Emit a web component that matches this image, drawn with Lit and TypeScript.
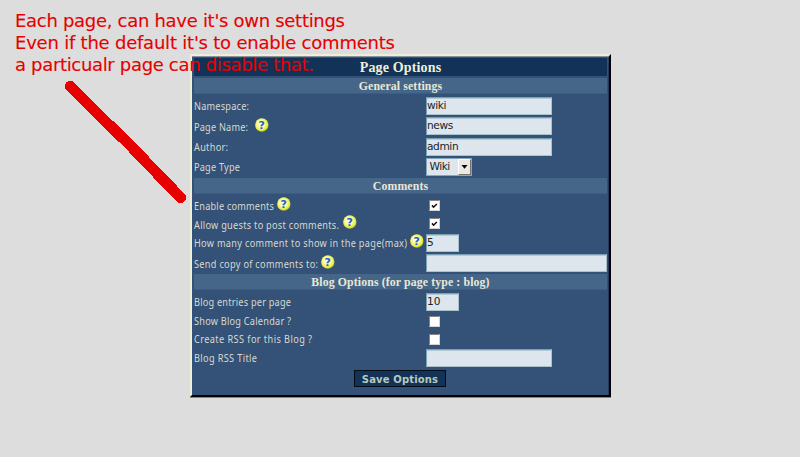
import { LitElement, html, svg, css, nothing } from "lit";
import { customElement, property } from "lit/decorators.js";
import { styleMap } from "lit/directives/style-map.js";

@customElement("help-icon")
class HelpIcon extends LitElement {
  static styles = css`
    :host { display: block; width: 14px; height: 14px; }
    svg { display: block; }
    .mark { font: bold 11px "DejaVu Sans", sans-serif; fill: #1f5fd0; }
  `;
  render() {
    return html`<svg width="14" height="14" viewBox="0 0 14 14">
      <defs>
        <radialGradient id="g" cx="45%" cy="42%" r="60%">
          <stop offset="0" stop-color="#ffffe8" />
          <stop offset=".5" stop-color="#f8fa9a" />
          <stop offset=".8" stop-color="#e6ec38" />
          <stop offset="1" stop-color="#a9b52c" />
        </radialGradient>
      </defs>
      <circle cx="6.8" cy="7" r="6.7" fill="url(#g)" />
      <text class="mark" x="6.8" y="11" text-anchor="middle">?</text>
    </svg>`;
  }
}

type Row = {
  label: string;
  h: number;
  w: number;
  dy?: number;
  help?: number;
  kind: "text" | "check" | "select";
  value?: string;
  size?: "mid" | "small" | "wide";
};

const general: Row[] = [
  { label: "Namespace:", h: 20, w: 55, kind: "text", value: "wiki", size: "mid" },
  { label: "Page Name:", h: 20, w: 54, dy: 1, help: 7, kind: "text", value: "news", size: "mid" },
  { label: "Author:", h: 21, w: 34, kind: "text", value: "admin", size: "mid" },
  { label: "Page Type", h: 20, w: 46, kind: "select", value: "Wiki" },
];
const comments: Row[] = [
  { label: "Enable comments", h: 20, w: 80, dy: 1, help: 3, kind: "check", value: "on" },
  { label: "Allow guests to post comments.", h: 17, w: 145, dy: 0.6, help: 4, kind: "check", value: "on" },
  { label: "How many comment to show in the page(max)", h: 21, w: 213, dy: 0.4, help: 3, kind: "text", value: "5", size: "small" },
  { label: "Send copy of comments to:", h: 20, w: 124, dy: 0.6, help: 3, kind: "text", value: "", size: "wide" },
];
const blog: Row[] = [
  { label: "Blog entries per page", h: 20, w: 97, kind: "text", value: "10", size: "small" },
  { label: "Show Blog Calendar ?", h: 18, w: 97, kind: "check" },
  { label: "Create RSS for this Blog ?", h: 18, w: 118, kind: "check" },
  { label: "Blog RSS Title", h: 20, w: 63, dy: 0.4, kind: "text", value: "", size: "mid" },
];

/* Horizontal narrowing of the label face; the spacing takes up the rest of the width. */
const NARROW = 0.89;

@customElement("option-row")
class OptionRow extends LitElement {
  @property({ attribute: false }) row!: Row;
  static styles = css`
    :host { display: block; }
    .row { display: grid; grid-template-columns: 232px 1fr; align-items: center; }
    .left { display: flex; align-items: center; height: 14px; }
    .label { display: block; overflow: visible; flex: none; height: 14px; }
    .label text { font: 10.3px "Noto Sans", sans-serif; fill: #d6dad0; }
    .help { margin-top: -3px; }
    .input {
      box-sizing: border-box; height: 18px; border: 1px solid; border-color: #7ba0b4 #a9c3cd #a9c3cd #7ba0b4;
      background: #dde6ec; color: #202427; font: 10.6px/14px "DejaVu Sans", sans-serif; letter-spacing: -.4px;
      box-shadow: inset 0 1px #b4cbd6;
    }
    .mid { width: 126px; } .small { width: 33px; letter-spacing: 0; } .wide { width: 181px; }
    .select { box-sizing: border-box; width: 46px; height: 18px; display: flex; border: 1px solid #83a8ba; letter-spacing: -.5px;
      background: #dde6ec; color: #202427; font: 10.6px/14px "DejaVu Sans", sans-serif; padding-left: 2.5px; justify-content: space-between; }
    .arrow { box-sizing: border-box; width: 13px; height: 16px; background: #ebe8e3; border: 1px solid;
      border-color: #fff #77736f #77736f #fff; display: grid; place-items: center; }
    .arrow svg, .check svg { display: block; }
    .check { box-sizing: border-box; width: 11px; height: 11px; margin-left: 3px; background: #fff;
      border: 1px solid; border-color: #8b8380 #d6d2cf #d6d2cf #8b8380; }
  `;
  control(r: Row) {
    if (r.kind === "check")
      return html`<div class="check">${r.value
        ? html`<svg width="9" height="9" viewBox="0 0 9 9"><path d="M2 4.4 L3.6 6.2 L6.8 3" fill="none" stroke="#111" stroke-width="1.6" /></svg>`
        : nothing}</div>`;
    if (r.kind === "select")
      return html`<div class="select"><span>${r.value}</span><span class="arrow"><svg width="7" height="4" viewBox="0 0 7 4"><path d="M.5 0h6l-3 3.7z" fill="#000" /></svg></span></div>`;
    return html`<div class="input ${r.size}">${r.value}</div>`;
  }
  render() {
    const r = this.row;
    return html`<div class="row" style=${styleMap({ height: r.h + "px" })}>
      <div class="left">
        <svg class="label" width=${r.w} height="14">${svg`<text x="0" y=${11 + (r.dy ?? 0)} transform="scale(${NARROW} 1)" textLength=${r.w / NARROW}>${r.label}</text>`}</svg>
        ${r.help ? html`<help-icon class="help" style=${styleMap({ marginLeft: r.help + "px" })}></help-icon>` : nothing}
      </div>
      ${this.control(r)}
    </div>`;
  }
}

@customElement("app-root")
class AppRoot extends LitElement {
  static styles = css`
    :host { display: block; position: relative; width: 800px; height: 457px; overflow: hidden; background: #ddd; padding-top: 54px; box-sizing: border-box; }
    .panel { box-sizing: border-box; width: 421px; height: 343px; margin-left: 190px; background: #345177;
      border: 2px solid; border-color: #f1eed7 #000 #000 #f1eed7; padding: 2px 2px 0;
      box-shadow: inset 0 1px #84939f, inset -1px 0 #243d62, 0 1px #858585; }
    .title, .head { text-align: center; color: #f1eed7; font-family: "Liberation Serif", serif; font-weight: bold; white-space: nowrap; }
    .title { height: 18px; line-height: 20px; background: #123357; font-size: 14px; letter-spacing: .15px; margin-bottom: 2px; }
    .head { height: 15px; line-height: 16px; background: #456689; font-size: 11.8px; letter-spacing: .12px; color: #e8e8d6; border-bottom: 1px solid #3d5c80; }
    .rows { padding: 2px 0 1px; }
    .general { padding-top: 2px; }
    .comments { padding: 1px 0; }
    .save { box-sizing: border-box; width: 92px; height: 17px; margin: 1px auto 0; border: 1px solid #050c16; background: #123357;
      color: #b9c9bd; font: bold 10px/17px "DejaVu Sans", sans-serif; letter-spacing: .15px; text-align: center; white-space: nowrap; position: relative; left: -.5px; }
    .note { position: absolute; left: 0; top: 0; pointer-events: none; }
    .note text { font: 18px "DejaVu Sans", sans-serif; fill: #e60000; stroke: #e60000; stroke-width: .12px; }
  `;
  section(title: string, rows: Row[], cls: string) {
    return html`<div class="head">${title}</div>
      <div class="rows ${cls}">${rows.map((r) => html`<option-row .row=${r}></option-row>`)}</div>`;
  }
  render() {
    return html`
      <div class="panel">
        <div class="title">Page Options</div>
        ${this.section("General settings", general, "general")}
        ${this.section("Comments", comments, "comments")}
        ${this.section("Blog Options (for page type : blog)", blog, "blog")}
        <div class="save">Save Options</div>
      </div>
      <svg class="note" width="800" height="457">
        <text x="15" y="27" textLength="330">Each page, can have it's own settings</text>
        <text x="15" y="49" textLength="380">Even if the default it's to enable comments</text>
        <text x="15" y="71" textLength="299">a particualr page can disable that.</text>
        <path d="M70.3 86.3 L98 114 L103 119 L128 143 L150 166 L180.5 197.5" fill="none" stroke="#e60000" stroke-width="11" stroke-linecap="round" stroke-linejoin="round" shape-rendering="crispEdges" />
      </svg>`;
  }
}
